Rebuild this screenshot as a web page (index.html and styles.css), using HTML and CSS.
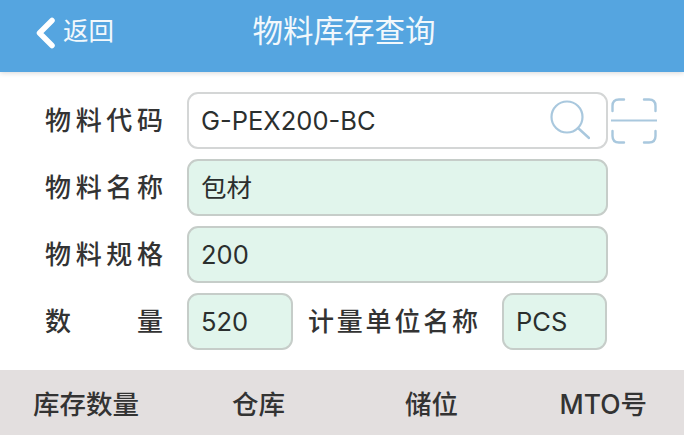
FILE: index.html
```html
<!DOCTYPE html>
<html lang="zh-CN">
<head>
  <meta charset="UTF-8" />
  <meta name="viewport" content="width=device-width, initial-scale=1.0"/>
  <title>物料库存查询</title>
  <link rel="stylesheet" href="styles.css">
</head>
<body>

  <div class="app-header">
    <div class="back">
      <svg class="back-icon" width="20" height="32" viewBox="0 0 20 32">
        <path d="M17 3.5 L4.5 16 L17 28.5" fill="none" stroke="#fff" stroke-width="5.5" stroke-linecap="round" stroke-linejoin="round"/>
      </svg>
      <span>返回</span>
    </div>
    <div class="title">物料库存查询</div>
  </div>

  <div class="form">
    <div class="row">
      <div class="label">物料代码</div>
      <div class="field field-white">
        <span>G-PEX200-BC</span>
        <svg class="search-icon" width="44" height="40" viewBox="0 0 44 40">
          <circle cx="21" cy="17" r="15.5" fill="none" stroke="#a9c8de" stroke-width="2.2"/>
          <path d="M32 28 L43 38" fill="none" stroke="#a9c8de" stroke-width="2.4" stroke-linecap="round"/>
        </svg>
      </div>
      <svg class="scan-icon" width="46" height="46" viewBox="0 0 46 46">
        <path d="M1.5 13 V8 Q1.5 1.5 8 1.5 H13 M33 1.5 H38 Q44.5 1.5 44.5 8 V13 M1.5 33 V38 Q1.5 44.5 8 44.5 H13 M33 44.5 H38 Q44.5 44.5 44.5 38 V33" fill="none" stroke="#a9c8de" stroke-width="2.4" stroke-linecap="round"/>
        <path d="M0 22.5 H46" fill="none" stroke="#a9c8de" stroke-width="2.2"/>
      </svg>
    </div>
    <div class="row">
      <div class="label">物料名称</div>
      <div class="field">包材</div>
    </div>
    <div class="row">
      <div class="label">物料规格</div>
      <div class="field">200</div>
    </div>
    <div class="row">
      <div class="label">数量</div>
      <div class="field field-qty">520</div>
      <div class="unit-label">计量单位名称</div>
      <div class="field field-unit">PCS</div>
    </div>
  </div>

  <div class="table-head">
    <div>库存数量</div>
    <div>仓库</div>
    <div>储位</div>
    <div class="col-last">MTO号</div>
  </div>

</body>
</html>
```

FILE: styles.css
```css
body {
  font-family: Inter, "Noto Sans CJK SC", "Noto Sans", sans-serif;
  background: #fff;
  color: #2b2f2e;
  margin: 0;
  padding: 0;
  height: 437px;
  overflow: hidden;
}
.app-header {
  position: relative;
  height: 72px;
  background-color: #55a5e0;
  color: #f2f8fc;
  display: flex;
  align-items: center;
  justify-content: center;
  box-shadow: 0 1px 5px rgba(0,0,0,0.16);
}
.back {
  position: absolute;
  left: 35px;
  top: 0;
  height: 57px;
  display: flex;
  align-items: center;
  gap: 8px;
  font-size: 25.5px;
}
.back-icon {
  margin-top: 9px;
}
.title {
  font-size: 30.5px;
  margin-bottom: 15px;
  margin-left: 4px;
}
.form {
  padding: 20px 0 0 45px;
  display: flex;
  flex-direction: column;
  gap: 11px;
}
.row {
  display: flex;
  align-items: center;
  height: 56px;
}
.label {
  width: 118px;
  margin-right: 24px;
  padding-bottom: 3px;
  font-size: 26px;
  font-weight: 500;
  color: #333;
  text-align: justify;
  text-align-last: justify;
  flex-shrink: 0;
}
.field {
  box-sizing: border-box;
  width: 421px;
  height: 57px;
  padding-left: 12px;
  background: #e1f5ec;
  border: 2px solid #c6cdc9;
  border-radius: 11px;
  font-size: 25.5px;
  line-height: 53px;
  flex-shrink: 0;
}
.field-white {
  position: relative;
  background: #fff;
  border-color: #d4d6d6;
  display: flex;
  align-items: center;
  justify-content: space-between;
  padding-right: 16px;
}
.search-icon {
  flex-shrink: 0;
}
.scan-icon {
  margin-left: 3px;
  margin-top: 1px;
  flex-shrink: 0;
}
.field-qty {
  width: 106px;
}
.unit-label {
  width: 171px;
  margin: 0 23px 0 15px;
  padding-bottom: 3px;
  font-size: 26px;
  font-weight: 500;
  color: #333;
  letter-spacing: 2.8px;
  white-space: nowrap;
  flex-shrink: 0;
}
.field-unit {
  width: 105px;
}
.table-head {
  margin-top: 21px;
  height: 65px;
  background: #e3dfdf;
  display: grid;
  grid-template-columns: 172px 173px 173px 1fr;
  align-items: center;
  text-align: center;
  font-size: 26.5px;
  font-weight: 500;
  color: #333;
}
.col-last {
  text-align: right;
  padding-right: 37px;
}
```
